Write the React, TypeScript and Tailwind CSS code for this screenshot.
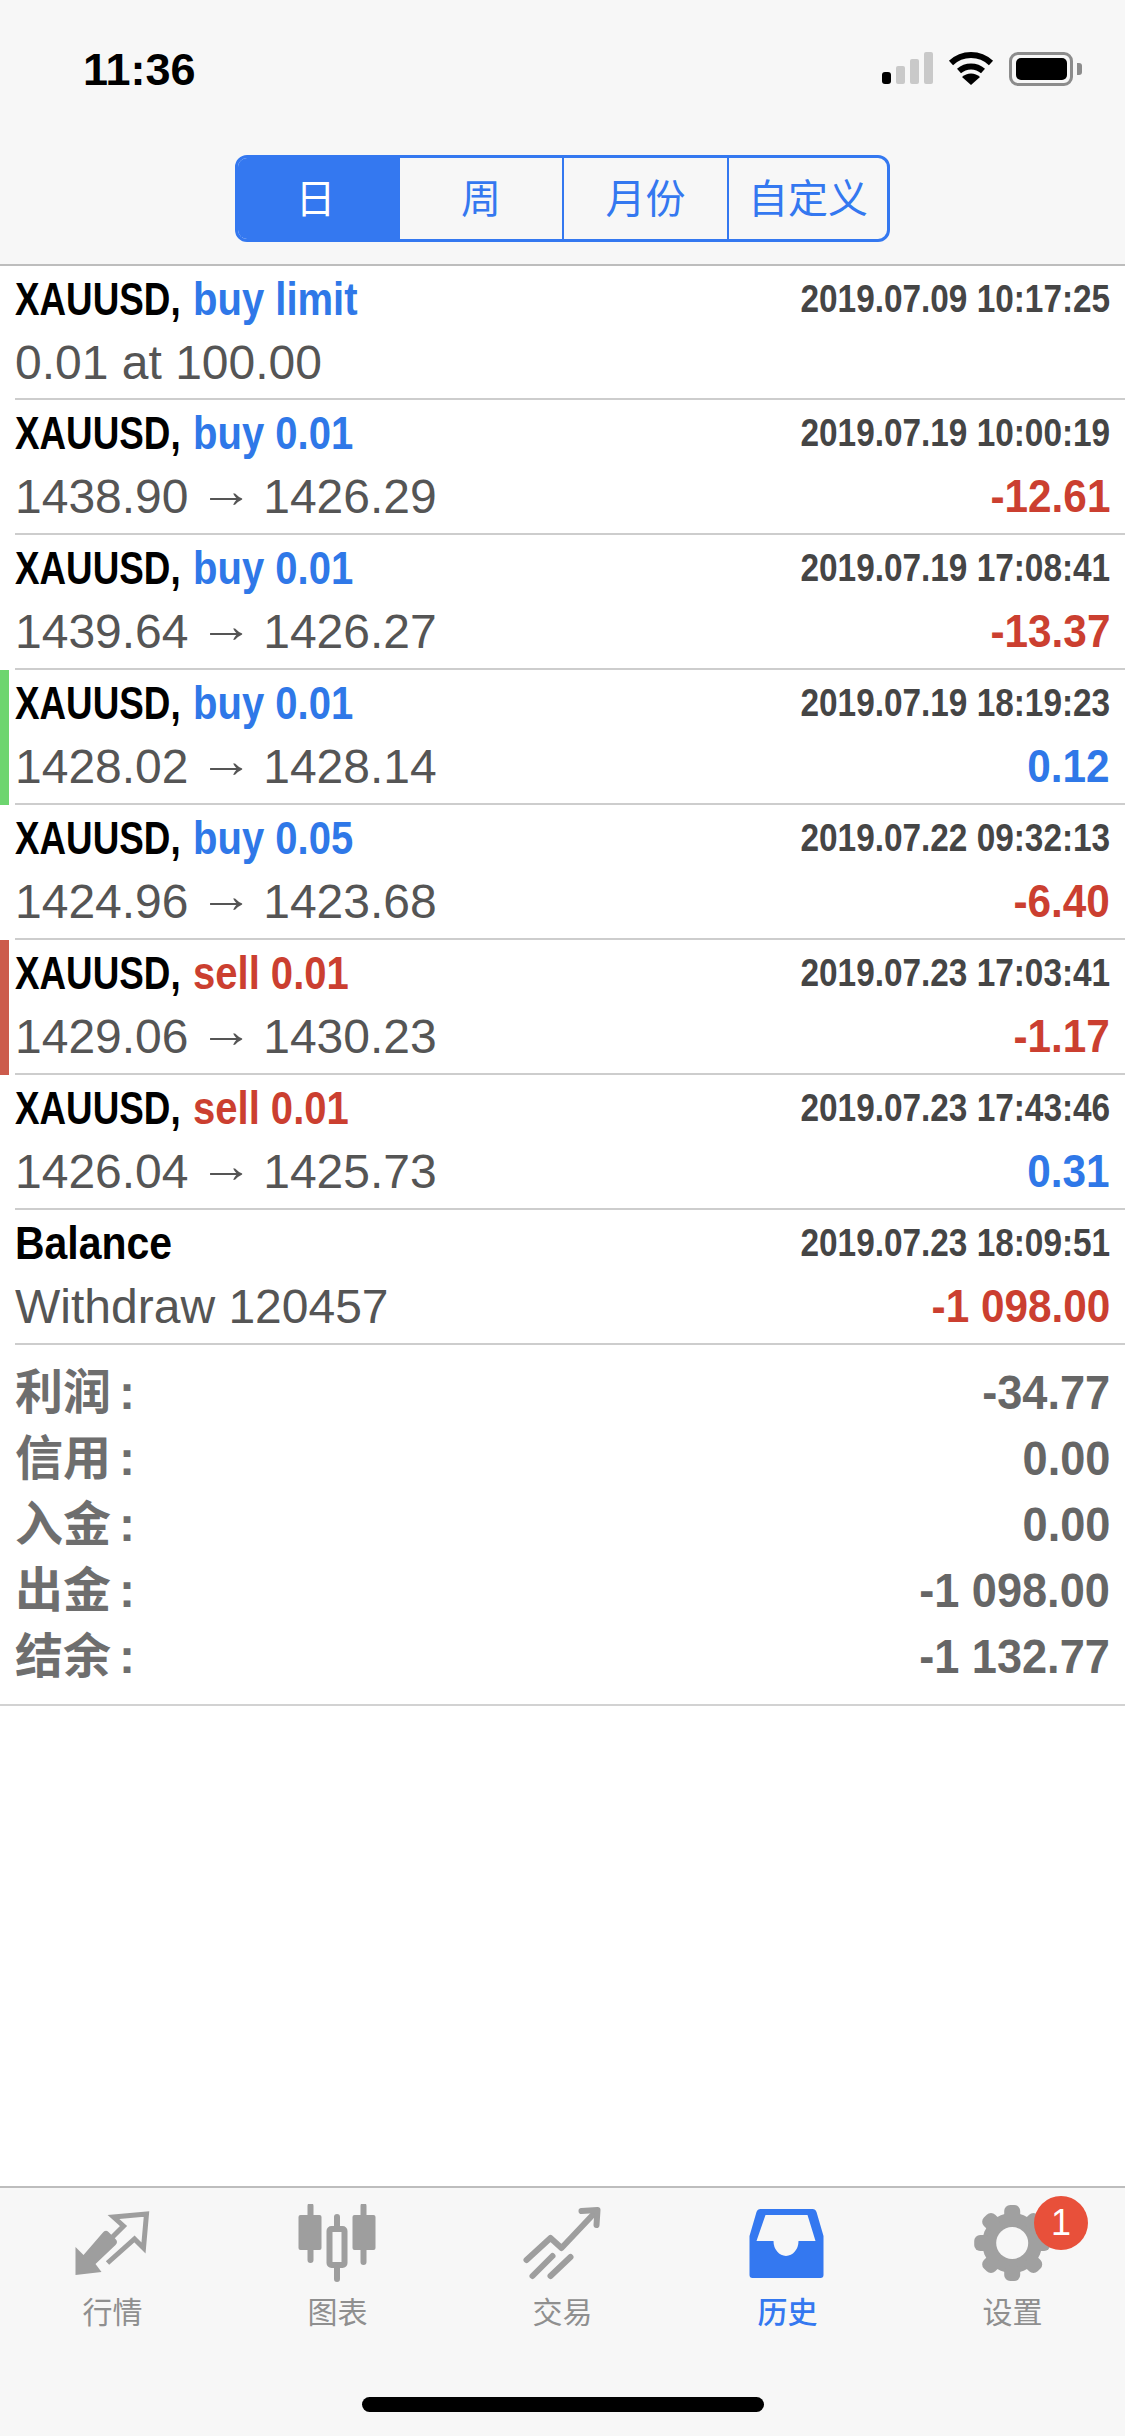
import React from "react";

function Title({ name, side, color }: { name: string; side?: string; color?: string }) {
  return (
    <span className="flex whitespace-nowrap text-[46px] font-bold leading-[63px] text-black">
      {side ? (
        <>
          <span className="inline-block w-[178px] origin-left scale-x-[0.8]">{name}</span>
          <span className={`inline-block origin-left scale-x-[0.87] ${color}`}>{side}</span>
        </>
      ) : (
        <span className="inline-block origin-left scale-x-[0.89]">{name}</span>
      )}
    </span>
  );
}

function Amount({ value, color }: { value: string; color: string }) {
  return (
    <span className={`inline-block origin-right scale-x-[0.92] whitespace-nowrap text-[46px] font-bold leading-[63px] ${color}`}>
      {value}
    </span>
  );
}

function Detail({ text }: { text: string }) {
  const parts = text.split(" → ");
  return (
    <span className="whitespace-nowrap text-[48px] leading-[63px] text-[#555555]">
      {parts[0]}
      {parts.length > 1 ? (
        <>
          {" "}
          <span className="inline-block origin-center scale-x-[1.13] align-[6px] leading-none">→</span> {parts[1]}
        </>
      ) : null}
    </span>
  );
}

type Row = {
  name: string;
  side?: string;
  sideColor?: string;
  time: string;
  detail: string;
  amount?: string;
  amountColor?: string;
  marker?: string;
  first?: boolean;
};

const BLUE = "text-[#2f78e8]";
const RED = "text-[#cb3f30]";

const rows: Row[] = [
  { name: "XAUUSD,", side: "buy limit", sideColor: BLUE, time: "2019.07.09 10:17:25", detail: "0.01 at 100.00", first: true },
  { name: "XAUUSD,", side: "buy 0.01", sideColor: BLUE, time: "2019.07.19 10:00:19", detail: "1438.90 → 1426.29", amount: "-12.61", amountColor: RED },
  { name: "XAUUSD,", side: "buy 0.01", sideColor: BLUE, time: "2019.07.19 17:08:41", detail: "1439.64 → 1426.27", amount: "-13.37", amountColor: RED },
  { name: "XAUUSD,", side: "buy 0.01", sideColor: BLUE, time: "2019.07.19 18:19:23", detail: "1428.02 → 1428.14", amount: "0.12", amountColor: BLUE, marker: "bg-[#6dd56f]" },
  { name: "XAUUSD,", side: "buy 0.05", sideColor: BLUE, time: "2019.07.22 09:32:13", detail: "1424.96 → 1423.68", amount: "-6.40", amountColor: RED },
  { name: "XAUUSD,", side: "sell 0.01", sideColor: RED, time: "2019.07.23 17:03:41", detail: "1429.06 → 1430.23", amount: "-1.17", amountColor: RED, marker: "bg-[#cc5b4c]" },
  { name: "XAUUSD,", side: "sell 0.01", sideColor: RED, time: "2019.07.23 17:43:46", detail: "1426.04 → 1425.73", amount: "0.31", amountColor: BLUE },
  { name: "Balance", time: "2019.07.23 18:09:51", detail: "Withdraw 120457", amount: "-1 098.00", amountColor: RED },
];

const summary = [
  ["利润", "-34.77"],
  ["信用", "0.00"],
  ["入金", "0.00"],
  ["出金", "-1 098.00"],
  ["结余", "-1 132.77"],
];

function HistoryRow({ row }: { row: Row }) {
  return (
    <div className={`relative pl-[15px] ${row.first ? "h-[134px]" : "h-[135px]"}`}>
      {row.marker ? <div className={`absolute bottom-0 left-0 top-0 w-[9px] ${row.marker}`} /> : null}
      <div className="h-full border-b-2 border-[#cdcdcd] pr-[15px] pt-[2px]">
        <div className="flex h-[63px] items-start justify-between">
          <Title name={row.name} side={row.side} color={row.sideColor} />
          <span className="inline-block origin-right scale-x-[0.855] whitespace-nowrap text-[39px] font-bold leading-[61px] text-[#454545]">
            {row.time}
          </span>
        </div>
        <div className="flex h-[63px] items-start justify-between">
          <Detail text={row.detail} />
          {row.amount ? <Amount value={row.amount} color={row.amountColor ?? ""} /> : null}
        </div>
      </div>
    </div>
  );
}

function Tab({ label, active, width }: { label: string; active?: boolean; width: string }) {
  return (
    <div
      className={`flex items-center justify-center border-l-2 border-[#3478f0] first:border-l-0 text-[40px] ${width} ${
        active ? "bg-[#3478f0] pr-[5px] text-white" : "text-[#3478f0]"
      }`}
    >
      {label}
    </div>
  );
}

function MarketIcon() {
  return (
    <svg width="90" height="80" viewBox="-7.5 -8 90 80" fill="none">
      <path d="M0 63 V35 L8 43 L27 21 Q30 17 33 20 L40 27 Q43 30 40 33 L20 52 L26 60 Z" fill="#9e9e9e" />
      <path d="M32 51 L59 27 L68 36 L71 2 L38 5 L48 14 L37 25" stroke="#9e9e9e" strokeWidth="5" />
    </svg>
  );
}

function ChartIcon() {
  return (
    <svg width="90" height="80" viewBox="-6.5 -2 90 80" fill="none">
      <path d="M11 0 V54 M37.5 11 V73 M64 0 V56" stroke="#9e9e9e" strokeWidth="6" strokeLinecap="round" />
      <rect x="-1" y="9" width="23" height="35" rx="2" fill="#9e9e9e" />
      <rect x="53" y="9" width="23" height="35" rx="2" fill="#9e9e9e" />
      <rect x="30" y="23" width="15" height="36" rx="2" fill="#f7f7f7" stroke="#9e9e9e" strokeWidth="6" />
    </svg>
  );
}

function TradeIcon() {
  return (
    <svg width="90" height="80" viewBox="-6.5 -4 90 80" fill="none" stroke="#9e9e9e" strokeWidth="6" strokeLinecap="round" strokeLinejoin="round">
      <path d="M2 52 L26 30 L37 40 L71 4" />
      <path d="M57 3 L73 2 L72 17" />
      <path d="M8 68 L28 48 M26 68 L46 49" />
    </svg>
  );
}

function HistoryIcon() {
  return (
    <svg width="90" height="80" viewBox="-6.5 -5 90 80">
      <path
        fillRule="evenodd"
        fill="#3478f0"
        d="M11 0 H63 Q66 0 67 3 L74 27 V66 Q74 69 71 69 H3 Q0 69 0 66 V27 L7 3 Q8 0 11 0 Z M16 6 H58 L66 32 H49 A12.5 15 0 0 1 24 32 H7 Z"
      />
    </svg>
  );
}

function GearIcon() {
  const angles = [0, 45, 90, 135, 180, 225, 270, 315];
  return (
    <svg width="90" height="80" viewBox="0 0 90 80">
      <circle cx="44.2" cy="39" r="30" fill="#a0a0a0" />
      {angles.map((a) => (
        <rect key={a} x="36.2" y="1" width="16" height="16" rx="6" fill="#a0a0a0" transform={`rotate(${a} 44.2 39)`} />
      ))}
      <circle cx="44.2" cy="39" r="16" fill="#f7f7f7" />
    </svg>
  );
}

function NavItem({ label, active, children }: { label: string; active?: boolean; children: React.ReactNode }) {
  return (
    <div className="relative flex flex-col items-center">
      {children}
      <span className={`mt-[9px] text-[30px] leading-[40px] ${active ? "font-medium text-[#3478f0]" : "text-[#8f8f8f]"}`}>{label}</span>
    </div>
  );
}

export default function App() {
  return (
    <div className="flex h-[2436px] w-[1125px] flex-col overflow-hidden bg-white font-['Liberation_Sans','Noto_Sans_CJK_SC',sans-serif]">
      <header className="h-[266px] shrink-0 border-b-2 border-[#bdbdbd] bg-[#f7f7f7]">
        <div className="flex h-[155px] items-start justify-between pl-[83px] pr-[43px] pt-[47px]">
          <span className="text-[45px] font-bold leading-[45px] text-black">11:36</span>
          <div className="flex items-start gap-[15px] pt-[5px]">
            <svg width="51" height="33" viewBox="0 0 51 33">
              <rect x="0" y="20" width="9" height="12" rx="3" fill="#000" />
              <rect x="14" y="14" width="9" height="18" rx="2" fill="#c9c9c9" />
              <rect x="28" y="7" width="9" height="25" rx="2" fill="#c9c9c9" />
              <rect x="42" y="0" width="9" height="32" rx="2" fill="#c9c9c9" />
            </svg>
            <svg width="46" height="33" viewBox="0 0 46 33" fill="none">
              <path d="M3 11 A29 29 0 0 1 43 11" stroke="#000" strokeWidth="6" />
              <path d="M11 19 A18 18 0 0 1 35 19" stroke="#000" strokeWidth="6" />
              <path d="M23 33 L14 25 A13 13 0 0 1 32 25 Z" fill="#000" />
            </svg>
            <div className="flex items-center">
              <div className="flex h-[34px] w-[64px] items-center justify-center rounded-[9px] border-[3px] border-[#8c8c8c]">
                <div className="h-[22px] w-[51px] rounded-[5px] bg-black" />
              </div>
              <div className="ml-[4px] h-[12px] w-[5px] rounded-r-[3px] bg-[#8c8c8c]" />
            </div>
          </div>
        </div>
        <div className="mx-auto flex h-[87px] w-[655px] overflow-hidden rounded-[12px] border-[3px] border-[#3478f0]">
          <Tab label="日" active width="w-[160px]" />
          <Tab label="周" width="w-[164px]" />
          <Tab label="月份" width="w-[165px]" />
          <Tab label="自定义" width="flex-1" />
        </div>
      </header>

      <main className="flex-1">
        {rows.map((row) => (
          <HistoryRow key={row.time} row={row} />
        ))}
        <div className="border-b-2 border-[#d2d2d2] pb-[14px] pr-[15px] pl-[15px] pt-[15px]">
          {summary.map(([label, value]) => (
            <div key={label} className="flex h-[66px] items-start justify-between">
              <span className="text-[48px] font-bold leading-[66px] text-[#6e6e6e]">
                {label}
                <span className="ml-[8px]">:</span>
              </span>
              <span className="inline-block origin-right scale-x-[0.94] whitespace-nowrap text-[48px] font-bold leading-[66px] text-[#666666]">
                {value}
              </span>
            </div>
          ))}
        </div>
      </main>

      <footer className="relative h-[250px] shrink-0 border-t-2 border-[#bdbdbd] bg-[#f7f7f7]">
        <div className="grid grid-cols-5 pt-[16px]">
          <NavItem label="行情">
            <MarketIcon />
          </NavItem>
          <NavItem label="图表">
            <ChartIcon />
          </NavItem>
          <NavItem label="交易">
            <TradeIcon />
          </NavItem>
          <NavItem label="历史" active>
            <HistoryIcon />
          </NavItem>
          <NavItem label="设置">
            <GearIcon />
            <div className="absolute left-[134px] top-[-8px] flex h-[54px] w-[54px] items-center justify-center rounded-full bg-[#e8503a] text-[36px] leading-none text-white">
              1
            </div>
          </NavItem>
        </div>
        <div className="absolute bottom-[24px] left-[362px] h-[15px] w-[402px] rounded-full bg-black" />
      </footer>
    </div>
  );
}
